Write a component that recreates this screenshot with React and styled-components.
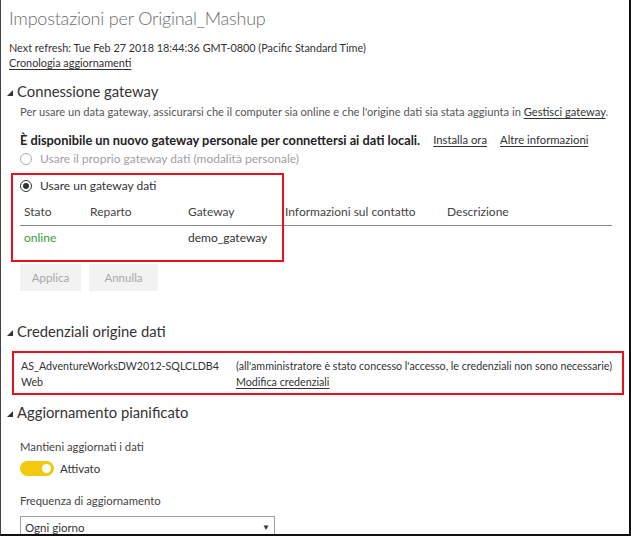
import React from "react";
import styled, { createGlobalStyle } from "styled-components";

const GlobalStyle = createGlobalStyle`
  html, body {
    margin: 0;
    padding: 0;
    background: #ffffff;
  }
  body {
    font-family: Lato, "Noto Sans", sans-serif;
    color: #333333;
  }
`;

const columns = [
  { key: "stato", label: "Stato", width: 66 },
  { key: "reparto", label: "Reparto", width: 98 },
  { key: "gateway", label: "Gateway", width: 97 },
  { key: "info", label: "Informazioni sul contatto", width: 162 },
  { key: "descr", label: "Descrizione", width: 169 },
];

function Caret() {
  return (
    <CaretIcon width="6" height="6" viewBox="0 0 6 6">
      <polygon points="6,0 6,6 0,6" fill="#333333" />
    </CaretIcon>
  );
}

function App() {
  return (
    <>
      <GlobalStyle />
      <Frame>
        <Title>Impostazioni per Original_Mashup</Title>
        <Meta>Next refresh: Tue Feb 27 2018 18:44:36 GMT-0800 (Pacific Standard Time)</Meta>
        <Meta>
          <Link>Cronologia aggiornamenti</Link>
        </Meta>

        <SectionHeader>
          <Caret />
          Connessione gateway
        </SectionHeader>
        <Section>
          <Note>
            Per usare un data gateway, assicurarsi che il computer sia online e che l'origine dati
            sia stata aggiunta in <Link>Gestisci gateway</Link>.
          </Note>
          <Promo>
            <strong>È disponibile un nuovo gateway personale per connettersi ai dati locali.</strong>
            <Link>Installa ora</Link>
            <Link>Altre informazioni</Link>
          </Promo>
          <Radio disabled>
            <RadioDot disabled />
            Usare il proprio gateway dati (modalità personale)
          </Radio>
          <Highlighted>
            <Radio checked>
              <RadioDot checked />
              Usare un gateway dati
            </Radio>
            <Table>
              <HeadRow>
                {columns.map((c) => (
                  <HeadCell key={c.key} $width={c.width}>
                    {c.label}
                  </HeadCell>
                ))}
              </HeadRow>
              <BodyRow>
                <Cell $width={66} $online>
                  online
                </Cell>
                <Cell $width={98} />
                <Cell $width={97}>demo_gateway</Cell>
                <Cell $width={162} />
                <Cell $width={169} />
              </BodyRow>
            </Table>
            <RedFrame />
          </Highlighted>
          <Buttons>
            <Button $width={61}>Applica</Button>
            <Button $width={69}>Annulla</Button>
          </Buttons>
        </Section>

        <SectionHeader $top={30}>
          <Caret />
          Credenziali origine dati
        </SectionHeader>
        <CredBox>
          <CredColumn $width={215}>
            <span>AS_AdventureWorksDW2012-SQLCLDB4</span>
            <span>Web</span>
          </CredColumn>
          <CredColumn>
            <span>
              (all'amministratore è stato concesso l'accesso, le credenziali non sono necessarie)
            </span>
            <Link>Modifica credenziali</Link>
          </CredColumn>
        </CredBox>

        <SectionHeader $top={7}>
          <Caret />
          Aggiornamento pianificato
        </SectionHeader>
        <Section>
          <Label $top={17}>Mantieni aggiornati i dati</Label>
          <ToggleRow>
            <Toggle>
              <Knob />
            </Toggle>
            Attivato
          </ToggleRow>
          <Label $top={17}>Frequenza di aggiornamento</Label>
          <Select>
            Ogni giorno
            <Arrow>▼</Arrow>
          </Select>
        </Section>
      </Frame>
    </>
  );
}

const Frame = styled.div`
  box-sizing: border-box;
  width: 631px;
  height: 536px;
  overflow: hidden;
  padding: 6px 0 0 8px;
  border-left: 1px solid #444444;
  border-right: 2px solid #111111;
  border-bottom: 2px solid #111111;
  font-size: 11px;
`;

const Title = styled.h1`
  margin: 0;
  font-size: 18px;
  line-height: 24px;
  font-weight: 300;
  letter-spacing: -0.2px;
  color: #6b6b6b;
`;

const Meta = styled.div`
  font-size: 10.85px;
  line-height: 15px;
  color: #333333;
  &:first-of-type {
    margin-top: 10px;
  }
`;

const Link = styled.a`
  color: #333333;
  text-decoration: underline;
  text-underline-offset: 2px;
`;

const SectionHeader = styled.h2`
  display: flex;
  align-items: center;
  gap: 4px;
  margin: ${(p) => (p.$top != null ? p.$top : 11)}px 0 0 -2px;
  font-size: 14.8px;
  line-height: 20px;
  font-weight: 400;
  color: #333333;
`;

const CaretIcon = styled.svg`
  flex: none;
  margin-top: 3px;
`;

const Section = styled.div`
  padding-left: 11px;
`;

const Note = styled.div`
  margin-top: 3px;
  font-size: 11.15px;
  line-height: 15px;
  color: #555555;
`;

const Promo = styled.div`
  display: flex;
  gap: 13px;
  margin-top: 13px;
  line-height: 16px;
  strong {
    font-size: 12.8px;
    font-weight: 700;
    color: #222222;
  }
  a {
    font-size: 11.3px;
  }
`;

const Radio = styled.div`
  display: flex;
  align-items: center;
  gap: 8px;
  margin-top: ${(p) => (p.checked ? 9 : 2)}px;
  font-size: 12px;
  line-height: 18px;
  color: ${(p) => (p.disabled ? "#a0a0a0" : "#333333")};
`;

const RadioDot = styled.span`
  box-sizing: border-box;
  width: 12px;
  height: 12px;
  border-radius: 50%;
  border: 1px solid ${(p) => (p.disabled ? "#b0b0b0" : "#333333")};
  display: flex;
  align-items: center;
  justify-content: center;
  &::after {
    content: "";
    display: ${(p) => (p.checked ? "block" : "none")};
    width: 6px;
    height: 6px;
    border-radius: 50%;
    background: #333333;
  }
`;

const Highlighted = styled.div`
  position: relative;
`;

const RedFrame = styled.div`
  position: absolute;
  left: -9px;
  top: -4px;
  width: 273px;
  height: 89px;
  box-sizing: border-box;
  border: 2px solid #e8101c;
  pointer-events: none;
`;

const Table = styled.div`
  margin-top: 8px;
  width: 592px;
  font-size: 12px;
`;

const HeadRow = styled.div`
  display: flex;
  border-bottom: 1px solid #8a8a8a;
  padding-bottom: 4px;
`;

const BodyRow = styled.div`
  display: flex;
  padding-top: 3px;
`;

const HeadCell = styled.div`
  flex: none;
  box-sizing: border-box;
  width: ${(p) => p.$width}px;
  padding-left: 4px;
  line-height: 18px;
  color: #444444;
`;

const Cell = styled(HeadCell)`
  color: ${(p) => (p.$online ? "#3a9c3a" : "#333333")};
`;

const Buttons = styled.div`
  display: flex;
  gap: 8px;
  margin-top: 17px;
`;

const Button = styled.button`
  width: ${(p) => p.$width}px;
  height: 27px;
  border: none;
  background: #f2f2f2;
  color: #a8a8a8;
  font-family: inherit;
  font-size: 11.5px;
  padding: 0;
`;

const CredBox = styled.div`
  display: flex;
  box-sizing: border-box;
  width: 612px;
  margin: 10px 0 0 3px;
  padding: 5px 7px 3px;
  border: 2px solid #e8101c;
  line-height: 16px;
  font-size: 10.7px;
  white-space: nowrap;
`;

const CredColumn = styled.div`
  display: flex;
  flex-direction: column;
  align-items: flex-start;
  flex: ${(p) => (p.$width ? "none" : "1")};
  width: ${(p) => (p.$width ? `${p.$width}px` : "auto")};
  min-width: 0;
  color: #333333;
`;

const Label = styled.div`
  margin-top: ${(p) => p.$top}px;
  line-height: 16px;
  font-size: 11.3px;
  color: #444444;
`;

const ToggleRow = styled.div`
  display: flex;
  align-items: center;
  gap: 6px;
  margin-top: 6px;
  height: 15px;
  font-size: 11.5px;
  color: #333333;
`;

const Toggle = styled.span`
  box-sizing: border-box;
  width: 34px;
  height: 15px;
  border-radius: 8px;
  background: #f2c811;
  display: flex;
  align-items: center;
  justify-content: flex-end;
  padding-right: 3px;
`;

const Knob = styled.span`
  width: 9px;
  height: 9px;
  border-radius: 50%;
  background: #ffffff;
`;

const Select = styled.div`
  display: flex;
  align-items: center;
  justify-content: space-between;
  box-sizing: border-box;
  width: 255px;
  height: 24px;
  margin-top: 7px;
  padding: 0 4px 2px 4px;
  border: 1px solid #a0a0a0;
  font-size: 11.5px;
  color: #333333;
`;

const Arrow = styled.span`
  font-size: 8px;
  color: #333333;
`;

export default App;
